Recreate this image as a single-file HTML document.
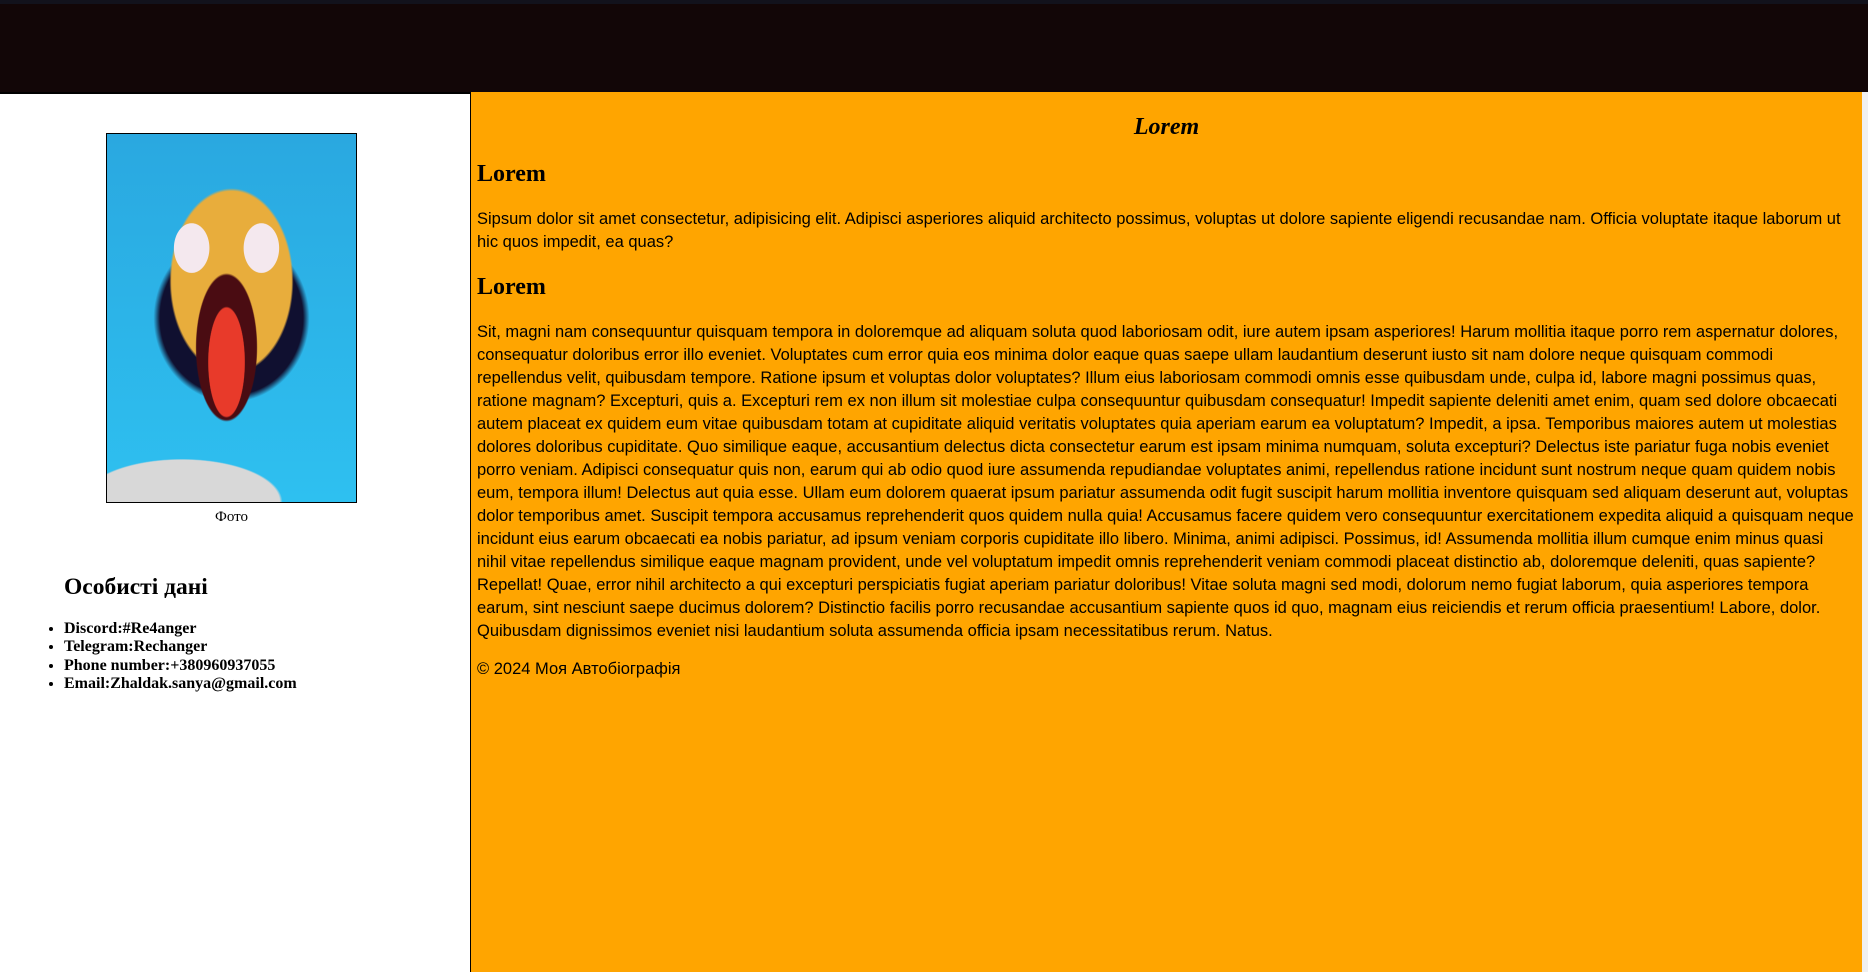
<!DOCTYPE html>
<html><head><meta charset="utf-8"><style>
html,body{margin:0;padding:0}
body{width:1868px;height:972px;position:relative;overflow:hidden;background:#fff;font-family:"Liberation Serif",serif;color:#000}
.hdr{position:absolute;left:0;top:0;width:1868px;height:92px;background:#120607}
.hdr .strip{position:absolute;left:0;top:0;width:1868px;height:4px;background:#12121c}
.left{position:absolute;left:0;top:92px;width:470px;height:880px;background:#fff;border-top:2px solid #000;box-sizing:border-box}
.main{position:absolute;left:470px;top:92px;width:1392px;height:880px;background:#ffa500;border-left:1px solid #000;box-sizing:border-box}
.sb{position:absolute;left:1862px;top:92px;width:6px;height:880px;background:#f0f0f0}
.photo{position:absolute;left:106px;top:133px;width:251px;height:370px;border:1px solid #000;box-sizing:border-box;
background:radial-gradient(ellipse 30px 90px at 48% 62%,#e83a2a 60%,transparent 62%),
radial-gradient(ellipse 50px 120px at 48% 58%,#4a0c12 60%,transparent 62%),
radial-gradient(ellipse 25px 35px at 34% 31%,#f4e8ee 70%,transparent 72%),
radial-gradient(ellipse 25px 35px at 62% 31%,#f4e8ee 70%,transparent 72%),
radial-gradient(ellipse 100px 150px at 50% 40%,#e8ad3c 60%,transparent 62%),
radial-gradient(ellipse 130px 140px at 50% 50%,#101030 55%,transparent 60%),
radial-gradient(ellipse 140px 60px at 30% 100%,#d8d8d8 70%,transparent 72%),
linear-gradient(#2aa8e0,#2ec0f0)}
.cap{position:absolute;left:106px;width:251px;top:509px;text-align:center;font-size:15px}
.pd{position:absolute;left:64px;top:574px;font-size:23.5px;font-weight:bold;margin:0}
ul{position:absolute;left:24px;top:620px;margin:0;padding-left:40px;font-size:16px;font-weight:bold;line-height:18.3px}
.t{font-family:"Liberation Sans",sans-serif;font-size:16.5px;line-height:23px;position:absolute;left:6px;width:1380px;margin:0}
.h{position:absolute;left:6px;font-size:24px;font-weight:bold;margin:0}
</style></head><body>
<div class="hdr"><div class="strip"></div></div>
<div class="left"></div>
<div class="photo"></div>
<div class="cap">Фото</div>
<h3 class="pd">Особисті дані</h3>
<ul><li>Discord:#Re4anger</li><li>Telegram:Rechanger</li><li>Phone number:+380960937055</li><li>Email:Zhaldak.sanya@gmail.com</li></ul>
<div class="main">
<div style="position:absolute;left:0;width:1391px;top:22px;text-align:center;font-size:24px;font-weight:bold;font-style:italic">Lorem</div>
<div class="h" style="top:69px">Lorem</div>
<p class="t" style="top:116px">Sipsum dolor sit amet consectetur, adipisicing elit. Adipisci asperiores aliquid architecto possimus, voluptas ut dolore sapiente eligendi recusandae nam. Officia voluptate itaque laborum ut hic quos impedit, ea quas?</p>
<div class="h" style="top:182px">Lorem</div>
<p class="t" style="top:229px">Sit, magni nam consequuntur quisquam tempora in doloremque ad aliquam soluta quod laboriosam odit, iure autem ipsam asperiores! Harum mollitia itaque porro rem aspernatur dolores, consequatur doloribus error illo eveniet. Voluptates cum error quia eos minima dolor eaque quas saepe ullam laudantium deserunt iusto sit nam dolore neque quisquam commodi repellendus velit, quibusdam tempore. Ratione ipsum et voluptas dolor voluptates? Illum eius laboriosam commodi omnis esse quibusdam unde, culpa id, labore magni possimus quas, ratione magnam? Excepturi, quis a. Excepturi rem ex non illum sit molestiae culpa consequuntur quibusdam consequatur! Impedit sapiente deleniti amet enim, quam sed dolore obcaecati autem placeat ex quidem eum vitae quibusdam totam at cupiditate aliquid veritatis voluptates quia aperiam earum ea voluptatum? Impedit, a ipsa. Temporibus maiores autem ut molestias dolores doloribus cupiditate. Quo similique eaque, accusantium delectus dicta consectetur earum est ipsam minima numquam, soluta excepturi? Delectus iste pariatur fuga nobis eveniet porro veniam. Adipisci consequatur quis non, earum qui ab odio quod iure assumenda repudiandae voluptates animi, repellendus ratione incidunt sunt nostrum neque quam quidem nobis eum, tempora illum! Delectus aut quia esse. Ullam eum dolorem quaerat ipsum pariatur assumenda odit fugit suscipit harum mollitia inventore quisquam sed aliquam deserunt aut, voluptas dolor temporibus amet. Suscipit tempora accusamus reprehenderit quos quidem nulla quia! Accusamus facere quidem vero consequuntur exercitationem expedita aliquid a quisquam neque incidunt eius earum obcaecati ea nobis pariatur, ad ipsum veniam corporis cupiditate illo libero. Minima, animi adipisci. Possimus, id! Assumenda mollitia illum cumque enim minus quasi nihil vitae repellendus similique eaque magnam provident, unde vel voluptatum impedit omnis reprehenderit veniam commodi placeat distinctio ab, doloremque deleniti, quas sapiente? Repellat! Quae, error nihil architecto a qui excepturi perspiciatis fugiat aperiam pariatur doloribus! Vitae soluta magni sed modi, dolorum nemo fugiat laborum, quia asperiores tempora earum, sint nesciunt saepe ducimus dolorem? Distinctio facilis porro recusandae accusantium sapiente quos id quo, magnam eius reiciendis et rerum officia praesentium! Labore, dolor. Quibusdam dignissimos eveniet nisi laudantium soluta assumenda officia ipsam necessitatibus rerum. Natus.</p>
<p class="t" style="top:566px">© 2024 Моя Автобіографія</p>
</div>
<div class="sb"></div>
</body></html>
